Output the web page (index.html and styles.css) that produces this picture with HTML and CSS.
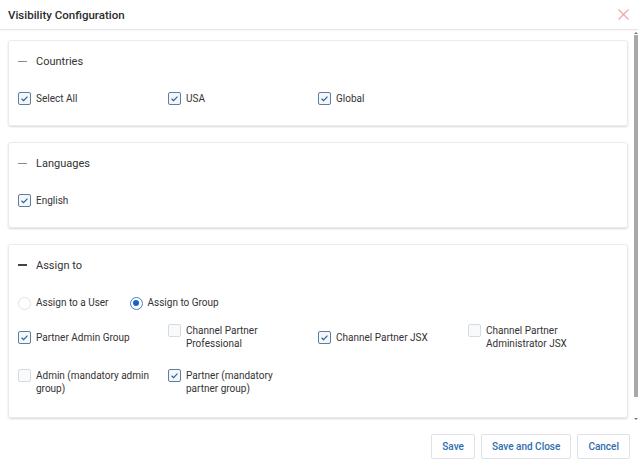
FILE: index.html
```html
<!DOCTYPE html>
<html lang="en">
<head>
    <meta charset="UTF-8">
    <meta name="viewport" content="width=device-width, initial-scale=1.0">
    <title>Visibility Configuration</title>
    <link rel="stylesheet" href="styles.css">
</head>
<body>
    <div class="modal">
        <header class="modal-header">
            <h1>Visibility Configuration</h1>
            <button class="close" aria-label="Close">
                <svg width="11" height="11" viewBox="0 0 11 11"><path d="M0.5 0.5 L10.5 10.5 M10.5 0.5 L0.5 10.5" stroke="#f1a3a3" stroke-width="1.1" fill="none"/></svg>
            </button>
        </header>

        <div class="modal-body">
            <div class="sections">
                <section class="card">
                    <div class="card-title"><span class="collapse"></span>Countries</div>
                    <div class="options">
                        <label class="check checked"><span class="box"><svg viewBox="0 0 13 13"><path d="M3 6.8 L5.4 9.1 L10 4.2" /></svg></span><span class="text">Select All</span></label>
                        <label class="check checked"><span class="box"><svg viewBox="0 0 13 13"><path d="M3 6.8 L5.4 9.1 L10 4.2" /></svg></span><span class="text">USA</span></label>
                        <label class="check checked"><span class="box"><svg viewBox="0 0 13 13"><path d="M3 6.8 L5.4 9.1 L10 4.2" /></svg></span><span class="text">Global</span></label>
                    </div>
                </section>

                <section class="card">
                    <div class="card-title"><span class="collapse"></span>Languages</div>
                    <div class="options">
                        <label class="check checked"><span class="box"><svg viewBox="0 0 13 13"><path d="M3 6.8 L5.4 9.1 L10 4.2" /></svg></span><span class="text">English</span></label>
                    </div>
                </section>

                <section class="card">
                    <div class="card-title"><span class="collapse dark"></span>Assign to</div>
                    <div class="radios">
                        <label class="radio"><span class="dot"></span>Assign to a User</label>
                        <label class="radio selected"><span class="dot"></span>Assign to Group</label>
                    </div>
                    <div class="groups">
                        <label class="check checked"><span class="box"><svg viewBox="0 0 13 13"><path d="M3 6.8 L5.4 9.1 L10 4.2" /></svg></span><span class="text">Partner Admin Group</span></label>
                        <label class="check top"><span class="box"></span><span class="text">Channel Partner Professional</span></label>
                        <label class="check checked"><span class="box"><svg viewBox="0 0 13 13"><path d="M3 6.8 L5.4 9.1 L10 4.2" /></svg></span><span class="text">Channel Partner JSX</span></label>
                        <label class="check top"><span class="box"></span><span class="text">Channel Partner Administrator JSX</span></label>
                        <label class="check top"><span class="box"></span><span class="text">Admin (mandatory admin group)</span></label>
                        <label class="check top checked"><span class="box"><svg viewBox="0 0 13 13"><path d="M3 6.8 L5.4 9.1 L10 4.2" /></svg></span><span class="text">Partner (mandatory partner group)</span></label>
                    </div>
                </section>
            </div>

            <div class="scrollbar">
                <span class="arrow up"></span>
                <span class="thumb"></span>
                <span class="arrow down"></span>
            </div>
        </div>

        <footer class="modal-footer">
            <button class="btn">Save</button>
            <button class="btn">Save and Close</button>
            <button class="btn">Cancel</button>
        </footer>
    </div>
</body>
</html>
```

FILE: styles.css
```css
body {
    margin: 0;
    padding: 0;
    font-family: Roboto, "Noto Sans", Arial, sans-serif;
    color: #333;
    background-color: #fff;
}
.modal {
    width: 638px;
    height: 466px;
    display: flex;
    flex-direction: column;
    background-color: #fff;
}
.modal-header {
    height: 29px;
    display: flex;
    align-items: center;
    justify-content: space-between;
    padding: 0 8px;
    border-bottom: 1px solid #e6e8eb;
    box-shadow: 0 1px 1px rgba(0, 0, 0, 0.03);
}
.modal-header h1 {
    margin: 0;
    font-size: 11.5px;
    font-weight: 500;
    color: #2b2b2b;
}
.close {
    border: none;
    background: none;
    padding: 0;
    margin-right: 1px;
    display: flex;
    cursor: pointer;
}
.modal-body {
    height: 392px;
    display: flex;
}
.sections {
    flex: 1;
    padding: 10px 6px 0 8px;
    display: flex;
    flex-direction: column;
    gap: 16px;
}
.card {
    border: 1px solid #ebebeb;
    border-radius: 3px;
    box-shadow: 0 1px 2px rgba(0, 0, 0, 0.16);
    padding: 13px 9px 20px;
}
.card:last-child {
    padding-bottom: 22px;
}
.card-title {
    display: flex;
    align-items: center;
    height: 14px;
    font-size: 11px;
    font-weight: 400;
    color: #333;
}
.collapse {
    width: 9px;
    height: 1px;
    background-color: #8a8a8a;
    margin: 0 9px 0 0;
}
.collapse.dark {
    height: 2px;
    background-color: #444;
}
.options {
    display: grid;
    grid-template-columns: repeat(4, 150px);
    margin-top: 24px;
}
.check {
    display: flex;
    align-items: center;
    font-size: 10px;
    line-height: 13px;
    color: #333;
}
.check.top {
    align-items: flex-start;
}
.check .text {
    max-width: 118px;
}
.box {
    width: 11px;
    height: 11px;
    flex: none;
    margin: 0 5px 0 0;
    border: 1px solid #d5dbe2;
    border-radius: 2px;
    background-color: #f8fafc;
    display: flex;
}
.check.checked .box {
    border-color: #5d7f9e;
    background-color: #f3f7fb;
}
.box svg {
    width: 11px;
    height: 11px;
}
.box svg path {
    fill: none;
    stroke: #2b5d8c;
    stroke-width: 1.3;
}
.radios {
    display: flex;
    gap: 21px;
    margin-top: 24px;
}
.radio {
    display: flex;
    align-items: center;
    font-size: 10px;
    line-height: 14px;
    color: #333;
}
.dot {
    width: 11px;
    height: 11px;
    margin: 0 5px 0 0;
    border: 1px solid #dfe3e7;
    border-radius: 50%;
    background-color: #fff;
    display: flex;
    align-items: center;
    justify-content: center;
}
.radio.selected .dot {
    border-color: #4a7fbf;
}
.radio.selected .dot::after {
    content: "";
    width: 6px;
    height: 6px;
    border-radius: 50%;
    background-color: #1565c8;
}
.groups {
    display: grid;
    grid-template-columns: repeat(4, 150px);
    align-items: center;
    row-gap: 19px;
    margin-top: 14px;
}
.scrollbar {
    width: 4px;
    display: flex;
    flex-direction: column;
    align-items: center;
    padding-top: 2px;
}
.thumb {
    width: 4px;
    height: 362px;
    background-color: #a9a9a9;
}
.arrow {
    width: 0;
    height: 0;
    border-left: 2px solid transparent;
    border-right: 2px solid transparent;
}
.arrow.up {
    border-bottom: 2px solid #777;
    margin-bottom: 1px;
}
.arrow.down {
    border-top: 2px solid #777;
    margin-top: auto;
    margin-bottom: 2px;
}
.modal-footer {
    flex: 1;
    display: flex;
    justify-content: flex-end;
    align-items: center;
    gap: 6px;
    padding: 4px 8px 0 0;
}
.btn {
    height: 25px;
    padding: 0 10px;
    border: 1px solid #dfe2e6;
    border-radius: 2px;
    background-color: #fff;
    color: #2f6db0;
    font-family: Roboto, "Noto Sans", Arial, sans-serif;
    font-size: 10px;
    font-weight: 500;
    cursor: pointer;
}
```
